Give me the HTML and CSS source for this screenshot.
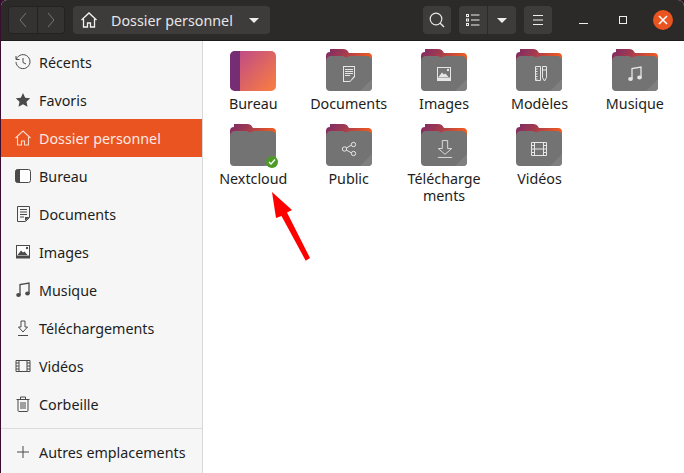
FILE: index.html
```html
<!DOCTYPE html>
<html lang="fr">
<head>
<meta charset="utf-8">
<title>Dossier personnel</title>
<link rel="stylesheet" href="styles.css">
</head>
<body>
<svg class="defs" width="0" height="0" aria-hidden="true">
  <defs>
    <linearGradient id="tab" x1="0" y1="0" x2="1" y2="0.25">
      <stop offset="0" stop-color="#7a2a68"/><stop offset="0.45" stop-color="#a33a4e"/><stop offset="1" stop-color="#ee5a22"/>
    </linearGradient>
    <linearGradient id="desk" x1="0" y1="0" x2="1" y2="0.8">
      <stop offset="0" stop-color="#b8458f"/><stop offset="1" stop-color="#f57a45"/>
    </linearGradient>
    <symbol id="folder" viewBox="0 0 46 42">
      <path d="M0 7a4 4 0 0 1 4-4V0h13c3 0 4 1 5 2.500l1 1.500h19a4 4 0 0 1 4 4v6H0z" fill="url(#tab)"/>
      <path d="M0 12a5 5 0 0 1 5-5h12l3 1.500 4-1.500h17a5 5 0 0 1 5 5v26a4 4 0 0 1-4 4H4a4 4 0 0 1-4-4z" fill="#737373"/>
      <path d="M46 30v8a4 4 0 0 1-4 4h-8z" fill="#7f7f7f"/>
    </symbol>
  </defs>
</svg>
<div class="window">
  <header class="bar">
    <div class="btn-group nav">
      <button class="tb wide"><svg width="10" height="16" viewBox="0 0 10 16"><path d="M8 1 2 8l6 7" fill="none" stroke="#77787a" stroke-width="1"/></svg></button>
      <button class="tb wide"><svg width="10" height="16" viewBox="0 0 10 16"><path d="m2 1 6 7-6 7" fill="none" stroke="#77787a" stroke-width="1"/></svg></button>
    </div>
    <div class="path">
      <svg class="path-home" width="16" height="16" viewBox="0 0 16 16"><path d="M.5 8 8 1l7.500 7M2.500 7v8h4v-4h3v4h4V7" fill="none" stroke="#f2f2f2" stroke-width="1.300"/></svg>
      <span class="path-label">Dossier personnel</span>
      <span class="caret"></span>
    </div>
    <div class="spacer"></div>
    <button class="tb single"><svg width="16" height="16" viewBox="0 0 16 16"><circle cx="7" cy="7" r="5.800" fill="none" stroke="#e6e6e6" stroke-width="1.200"/><path d="m11 11 4 4" stroke="#e6e6e6" stroke-width="1.500"/></svg></button>
    <div class="btn-group">
      <button class="tb view"><svg width="14" height="12" viewBox="0 0 14 12"><path d="M0 0h3v3H0zM0 4.500h3v3H0zM0 9h3v3H0z M1 1v1h1V1zM1 5.500v1h1v-1zM1 10v1h1v-1z" fill="#eee" fill-rule="evenodd"/><path d="M5 1h8.500M5 6h8.500M5 11h8.500" stroke="#eee"/></svg></button>
      <button class="tb view"><span class="caret"></span></button>
    </div>
    <button class="tb single menu"><svg width="12" height="10" viewBox="0 0 12 10"><path d="M1 .5h10M1 5h10M1 9.500h10" stroke="#eee"/></svg></button>
    <div class="win-controls">
      <span class="ctl"><span class="min"></span></span>
      <span class="ctl"><span class="max"></span></span>
      <span class="ctl"><span class="close"><svg width="10" height="10" viewBox="0 0 10 10"><path d="m1 1 8 8M9 1 1 9" stroke="#fff" stroke-width="1.600"/></svg></span></span>
    </div>
  </header>
  <div class="body">
    <aside class="side">
      <nav class="places">
        <a class="row"><svg class="ic" viewBox="0 0 16 16"><path d="M1.500 5A7 7 0 1 1 1 8M1 2v3.500h3.500M8 4v4.500l3 1.500" fill="none" stroke="#4a4a4a"/></svg>Récents</a>
        <a class="row"><svg class="ic" viewBox="0 0 16 16"><path d="m8 1 2.200 4.700 5 .6-3.700 3.400 1 5L8 12.200 3.500 14.700l1-5L.8 6.300l5-.6z" fill="#4a4a4a"/></svg>Favoris</a>
        <a class="row active"><svg class="ic" viewBox="0 0 16 16"><path d="M.5 8 8 1l7.500 7M2.500 7v8h4v-4h3v4h4V7" fill="none" stroke="#fbd9cb" stroke-width="1.100"/></svg>Dossier personnel</a>
        <a class="row"><svg class="ic" viewBox="0 0 16 16"><rect x=".5" y="1.500" width="15" height="13" rx="2" fill="#fff" stroke="#4a4a4a"/><path d="M2.500 1.500H5v13H2.500a2 2 0 0 1-2-2v-9a2 2 0 0 1 2-2z" fill="#4a4a4a"/></svg>Bureau</a>
        <a class="row"><svg class="ic" viewBox="0 0 16 16"><path d="M2.500.5h12v11l-4 4h-8z" fill="none" stroke="#4a4a4a"/><path d="M5 3.500h7M5 6h7M5 8.500h7M5 11h4" stroke="#4a4a4a"/><path d="M10 15v-4h4.500z" fill="#4a4a4a"/></svg>Documents</a>
        <a class="row"><svg class="ic" viewBox="0 0 16 16"><rect x="1" y="1" width="14" height="13.500" fill="#4a4a4a"/><rect x="2" y="2" width="12" height="9.500" fill="#fff"/><path d="M2.500 11 6 6.500l2 2 1.500-1 3 3.500z" fill="#4a4a4a"/><circle cx="12" cy="4" r="1.200" fill="#4a4a4a"/></svg>Images</a>
        <a class="row"><svg class="ic" viewBox="0 0 16 16"><path d="M5 13V2.500L14 1v10" fill="none" stroke="#4a4a4a" stroke-width="1.300"/><ellipse cx="3.500" cy="13" rx="2.300" ry="2" fill="#4a4a4a"/><ellipse cx="12.500" cy="11.500" rx="2.300" ry="2" fill="#4a4a4a"/></svg>Musique</a>
        <a class="row"><svg class="ic" viewBox="0 0 16 16"><path d="M6 1h4v6h2.500L8 12 3.500 7H6zM3 15.500h10" fill="none" stroke="#4a4a4a"/></svg>Téléchargements</a>
        <a class="row"><svg class="ic" viewBox="0 0 16 16"><path d="M1 2.500h14v11H1zM4 2.500v11M12 2.500v11M1 8h3M12 8h3M1 5h3M12 5h3M1 11h3M12 11h3" fill="none" stroke="#4a4a4a"/></svg>Vidéos</a>
        <a class="row"><svg class="ic" viewBox="0 0 16 16"><path d="M1.500 3.500h13M5.500 3V1h5v2M3 4v10.500a1 1 0 0 0 1 1h8a1 1 0 0 0 1-1V4M6 6v7M8 6v7M10 6v7" fill="none" stroke="#4a4a4a"/></svg>Corbeille</a>
      </nav>
      <hr class="sep">
      <a class="row other"><svg class="ic" viewBox="0 0 16 16"><path d="M8 2v12M2 8h12" stroke="#4a4a4a"/></svg>Autres emplacements</a>
    </aside>
    <main class="files">
      <div class="item">
        <svg class="desk" width="46" height="42" viewBox="0 0 46 42"><rect y="2" width="46" height="40" rx="5" fill="url(#desk)"/><path d="M5 2h5v40H5a5 5 0 0 1-5-5V7a5 5 0 0 1 5-5z" fill="#752d73"/></svg>
        <span class="label">Bureau</span>
      </div>
      <div class="item">
        <span class="ficon"><svg class="fold"><use href="#folder"/></svg><svg class="emb" viewBox="0 0 16 16"><path d="M2 0h12v11l-5 5H2z" fill="#e6e6e6"/><path d="M3 1h10v9l-4 5H3z" fill="#757575"/><path d="M4 3.500h8M4 5.500h8M4 7.500h8M4 9.500h5" stroke="#e6e6e6"/></svg></span>
        <span class="label">Documents</span>
      </div>
      <div class="item">
        <span class="ficon"><svg class="fold"><use href="#folder"/></svg><svg class="emb" viewBox="0 0 16 16"><rect x="1" y="1" width="14" height="14" fill="#e6e6e6"/><rect x="2" y="2" width="12" height="9.500" fill="#757575"/><path d="M2.500 11 6 6.500l2 2 1.500-1 3 3.500z" fill="#e6e6e6"/><circle cx="12" cy="4" r="1.200" fill="#e6e6e6"/></svg></span>
        <span class="label">Images</span>
      </div>
      <div class="item">
        <span class="ficon"><svg class="fold"><use href="#folder"/></svg><svg class="emb shift" viewBox="0 0 16 16"><path d="M2.500.5h5v14h-5zM9.500.5h4v11l-2 3.500-2-3.500zM2.500 3h2M2.500 5.500h2M2.500 8h2M2.500 10.500h2M2.500 13h2M9.500 4h4" fill="none" stroke="#e6e6e6"/></svg></span>
        <span class="label">Modèles</span>
      </div>
      <div class="item">
        <span class="ficon"><svg class="fold"><use href="#folder"/></svg><svg class="emb" viewBox="0 0 16 16"><path d="M5 13V2.500L14 1v10" fill="none" stroke="#e6e6e6" stroke-width="1.300"/><ellipse cx="3.500" cy="13" rx="2.300" ry="2" fill="#e6e6e6"/><ellipse cx="12.500" cy="11.500" rx="2.300" ry="2" fill="#e6e6e6"/></svg></span>
        <span class="label">Musique</span>
      </div>
      <div class="item">
        <span class="ficon"><svg class="fold"><use href="#folder"/></svg><span class="check"><svg width="8" height="8" viewBox="0 0 8 8"><path d="m1 4 2 2 4-4.500" fill="none" stroke="#fff" stroke-width="1.300"/></svg></span></span>
        <span class="label">Nextcloud</span>
      </div>
      <div class="item">
        <span class="ficon"><svg class="fold"><use href="#folder"/></svg><svg class="emb" viewBox="0 0 16 16"><path d="m3.500 8 8-4.500M3.500 8l8 4.500" stroke="#e6e6e6"/><circle cx="3.500" cy="8" r="2.200" fill="#757575" stroke="#e6e6e6"/><circle cx="12.500" cy="3.500" r="2.200" fill="#757575" stroke="#e6e6e6"/><circle cx="12.500" cy="12.500" r="2.200" fill="#757575" stroke="#e6e6e6"/></svg></span>
        <span class="label">Public</span>
      </div>
      <div class="item">
        <span class="ficon"><svg class="fold"><use href="#folder"/></svg><svg class="emb tall" viewBox="0 0 18 20"><path d="M6 .5h6v9h4.500L9 16 1.500 9.500H6zM1 19.500h16" fill="none" stroke="#e6e6e6"/></svg></span>
        <span class="label">Télécharge<br>ments</span>
      </div>
      <div class="item">
        <span class="ficon"><svg class="fold"><use href="#folder"/></svg><svg class="emb film" viewBox="0 0 16 14"><path d="M.5.500h15v13H.5zM3.500.5v13M12.500.5v13M.5 7h15M.5 3.500h3M12.500 3.500h3M.5 10.500h3M12.500 10.500h3" fill="none" stroke="#e6e6e6"/></svg></span>
        <span class="label">Vidéos</span>
      </div>
    </main>
  </div>
</div>
<svg class="arrow" width="44" height="74" viewBox="0 0 44 74"><path d="M1 1 21 19 16 21.500 39 67 34.700 69.700 10.500 25 5 27z" fill="#f00"/></svg>
</body>
</html>
```
FILE: styles.css
```css
* { box-sizing: border-box; }
html, body { margin: 0; height: 100%; }
body {
  background: #3b0d2e;
  overflow: hidden;
  position: relative;
  font-family: "Noto Sans", sans-serif;
  font-size: 14px;
  color: #1d1d1d;
}
.defs { position: absolute; }
.window {
  margin-left: 1px;
  height: 473px;
  display: flex;
  flex-direction: column;
  background: #fff;
  border-radius: 6px 6px 0 0;
  overflow: hidden;
}
.bar {
  flex: 0 0 41px;
  display: flex;
  align-items: flex-start;
  gap: 8px;
  padding: 6px 0 0 7px;
  background: #2c2929;
  border-bottom: 1px solid #1d1b1b;
}
.btn-group {
  display: flex;
  height: 28px;
  border-radius: 4px;
  overflow: hidden;
}
.nav { border: 1px solid #232121; }
.tb {
  display: flex;
  align-items: center;
  justify-content: center;
  height: 28px;
  padding: 0;
  border: 0;
  background: #3e3b3b;
}
.nav .tb { height: 26px; background: #353232; }
.wide { width: 28px; }
.wide + .wide { width: 27px; border-left: 1px solid #232121; }
.path {
  display: flex;
  align-items: center;
  width: 197px;
  height: 28px;
  background: #3e3b3b;
  border-radius: 4px;
  color: #e6e6e6;
}
.path-home { margin-left: 8px; }
.path-label { margin-left: 14px; flex: 1; font-size: 14.300px; white-space: nowrap; }
.path .caret { margin-right: 11px; }
.caret {
  width: 0;
  height: 0;
  border-left: 5px solid transparent;
  border-right: 5px solid transparent;
  border-top: 5px solid #eee;
}
.spacer { flex: 1; }
.single { width: 28px; border-radius: 4px; }
.view { width: 28px; }
.view + .view { width: 29px; border-left: 1px solid #2c2929; }
.win-controls {
  display: flex;
  align-items: center;
  height: 28px;
  margin-left: 3px;
  padding-right: 1px;
}
.ctl {
  display: flex;
  align-items: center;
  justify-content: center;
  width: 40px;
  height: 28px;
}
.min { width: 9px; height: 1px; margin-top: 6px; background: #eee; }
.max { width: 8px; height: 8px; border: 1px solid #eee; }
.close {
  display: flex;
  align-items: center;
  justify-content: center;
  width: 20px;
  height: 20px;
  border-radius: 50%;
  background: #e95420;
}
.body { flex: 1; display: flex; min-height: 0; }
.side {
  flex: 0 0 202px;
  background: #f6f6f6;
  border-right: 1px solid #d8d8d8;
}
.places { padding-top: 2px; }
.row {
  display: flex;
  align-items: center;
  height: 38px;
  padding-left: 14px;
  gap: 8px;
  font-size: 14.300px;
  white-space: nowrap;
}
.active { background: #e95420; color: #fbe9e2; }
.ic { width: 16px; height: 16px; flex: none; }
.sep { margin: 5px 0 0; border: 0; border-top: 1px solid #dcdcdc; }
.other { margin-top: 4px; }
.files {
  flex: 1;
  display: grid;
  grid-template-columns: repeat(5, 95.400px);
  align-content: start;
  row-gap: 0;
  padding: 8px 0 0 2.600px;
}
.item {
  display: flex;
  flex-direction: column;
  align-items: center;
  font-size: 14.300px;
  line-height: 17px;
  text-align: center;
  min-height: 75px;
}
.desk { display: block; }
.ficon { position: relative; display: block; width: 46px; height: 42px; }
.fold { display: block; width: 46px; height: 42px; }
.emb { position: absolute; left: 15px; top: 17px; width: 16px; height: 16px; }
.emb.shift { left: 17px; }
.emb.tall { left: 16px; top: 16px; width: 16px; height: 18px; }
.emb.film { top: 18px; width: 16px; height: 14px; }
.check {
  position: absolute;
  right: -2px;
  bottom: -2px;
  display: flex;
  align-items: center;
  justify-content: center;
  width: 12px;
  height: 12px;
  border-radius: 50%;
  background: #4e9a26;
}
.label { margin-top: 4px; white-space: nowrap; }
.arrow { position: absolute; left: 271px; top: 191px; }
```
